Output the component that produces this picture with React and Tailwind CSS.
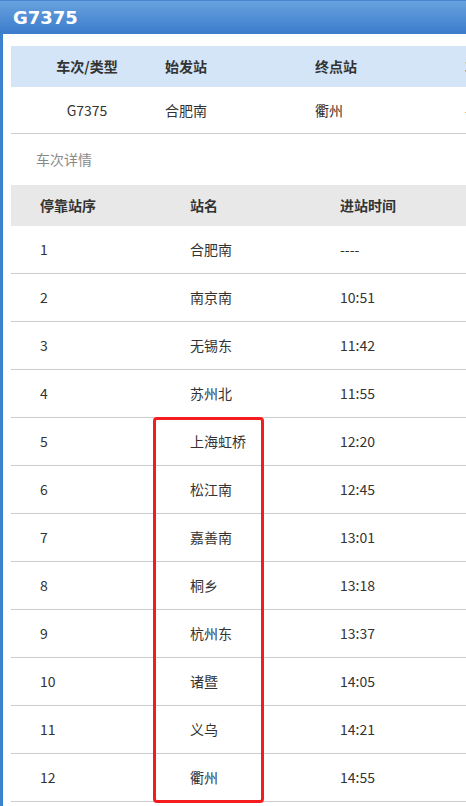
import React from "react";

const stops = [
  ["1", "合肥南", "----"],
  ["2", "南京南", "10:51"],
  ["3", "无锡东", "11:42"],
  ["4", "苏州北", "11:55"],
  ["5", "上海虹桥", "12:20"],
  ["6", "松江南", "12:45"],
  ["7", "嘉善南", "13:01"],
  ["8", "桐乡", "13:18"],
  ["9", "杭州东", "13:37"],
  ["10", "诸暨", "14:05"],
  ["11", "义乌", "14:21"],
  ["12", "衢州", "14:55"],
];

export default function App() {
  return (
    <div
      className="relative w-[466px] h-[806px] overflow-hidden bg-white text-[14px] text-[#333]"
      style={{ fontFamily: '"Noto Sans CJK SC", "Noto Sans", sans-serif' }}
    >
      <div className="h-[34px] bg-gradient-to-b from-[#68a2de] to-[#3a7bcb] border-t border-[#4a86d0] flex items-center pl-[13px]">
        <span
          className="text-white font-bold text-[18px] leading-none"
          style={{ fontFamily: '"DejaVu Sans", sans-serif' }}
        >
          G7375
        </span>
      </div>
      <div className="border-l-[3px] border-[#3c80d0] h-[772px] pl-[8px] pt-[12px]">
        <div className="w-[620px]">
          <div className="grid grid-cols-[152px_150px_150px_168px] h-[41px] bg-[#d3e5f7] items-center font-bold">
            <div className="text-center">车次/类型</div>
            <div className="pl-[2px]">始发站</div>
            <div className="pl-[2px]">终点站</div>
            <div className="pl-[2px]">车型</div>
          </div>
          <div className="grid grid-cols-[152px_150px_150px_168px] h-[47px] border-b border-[#cccccc] items-center">
            <div className="text-center">G7375</div>
            <div className="pl-[2px]">合肥南</div>
            <div className="pl-[2px]">衢州</div>
            <div className="pl-[2px]">-</div>
          </div>
        </div>
        <div className="h-[51px] flex items-center pl-[25px] text-[#8a8a8a]">车次详情</div>
        <div className="w-[620px]">
          <div className="grid grid-cols-[150px_150px_150px_170px] h-[41px] bg-[#e8e8e8] items-center font-bold">
            <div className="pl-[29px]">停靠站序</div>
            <div className="pl-[29px]">站名</div>
            <div className="pl-[29px]">进站时间</div>
            <div></div>
          </div>
          {stops.map(([n, name, t]) => (
            <div
              key={n}
              className="grid grid-cols-[150px_150px_150px_170px] h-[48px] border-b border-[#cccccc] items-center"
            >
              <div className="pl-[29px]">{n}</div>
              <div className="pl-[29px]">{name}</div>
              <div className="pl-[29px]">{t}</div>
              <div></div>
            </div>
          ))}
        </div>
      </div>
      <div className="absolute left-[153px] top-[417px] w-[111px] h-[386px] border-[3px] border-[#f41c1c] rounded-[4px] pointer-events-none" />
    </div>
  );
}
